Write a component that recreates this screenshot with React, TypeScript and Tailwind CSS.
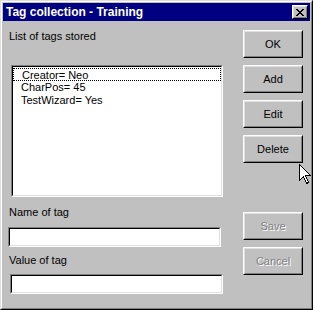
import React from "react";

const font = "font-['Liberation_Sans',Arial,sans-serif] text-[11px] leading-[13px] text-black";

const raised =
  "border border-t-white border-l-white border-b-black border-r-black";
const raisedInner =
  "border border-t-[#dfdfdf] border-l-[#dfdfdf] border-b-[#808080] border-r-[#808080]";
const sunken =
  "border border-t-[#808080] border-l-[#808080] border-b-white border-r-white";
const sunkenInner =
  "border border-t-black border-l-black border-b-[#dfdfdf] border-r-[#dfdfdf]";

function Btn({ label, disabled }: { label: string; disabled?: boolean }) {
  return (
    <div className={`w-[60px] h-[28px] ${raised}`}>
      <div className={`w-full h-full ${raisedInner} flex items-center justify-center`}>
        <span
          className={
            disabled
              ? "text-[#808080] [text-shadow:1px_1px_0_#fff]"
              : "text-black"
          }
        >
          {label}
        </span>
      </div>
    </div>
  );
}

function Field({ className }: { className: string }) {
  return (
    <div className={`h-[20px] ${sunken} ${className}`}>
      <div className={`w-full h-full bg-white ${sunkenInner}`}></div>
    </div>
  );
}

export default function App() {
  const tags = ["Creator= Neo", "CharPos= 45", "TestWizard= Yes"];

  return (
    <div className={`relative w-[313px] h-[310px] ${font}`}>
      <div className="w-full h-full border border-t-[#dfdfdf] border-l-[#dfdfdf] border-b-black border-r-black">
        <div className="w-full h-full border border-t-white border-l-white border-b-[#808080] border-r-[#808080] bg-[#c0c0c0] p-px flex flex-col">
          {/* title bar */}
          <div className="h-[18px] bg-[#000080] flex items-center justify-between pl-[3px] pr-[2px]">
            <span className="text-white font-bold text-[12px]">Tag collection - Training</span>
            <div className={`w-[16px] h-[14px] bg-[#c0c0c0] ${raised}`}>
              <div className={`w-full h-full ${raisedInner} flex items-center justify-center`}>
                <svg width="8" height="7" viewBox="0 0 8 7" shapeRendering="crispEdges">
                  <path
                    d="M0 0h2v1H0zM6 0h2v1H6zM1 1h2v1H1zM5 1h2v1H5zM2 2h4v1H2zM3 3h2v1H3zM2 4h4v1H2zM1 5h2v1H1zM5 5h2v1H5zM0 6h2v1H0zM6 6h2v1H6z"
                    fill="#000"
                  />
                </svg>
              </div>
            </div>
          </div>

          {/* body */}
          <div className="flex flex-1">
            <div className="w-[221px] flex flex-col">
              <div className="mt-[9px] ml-[6px] h-[13px]">List of tags stored</div>
              <div className={`mt-[22px] ml-[8px] w-[212px] h-[132px] ${sunken}`}>
                <div className={`w-full h-full bg-white ${sunkenInner} pt-px`}>
                  {tags.map((t, i) => (
                    <div
                      key={t}
                      className={`h-[13px] pl-[8px] leading-[12px] ${
                        i === 0 ? "border border-dotted border-black pl-[7px]" : ""
                      }`}
                    >
                      {t}
                    </div>
                  ))}
                </div>
              </div>
              <div className="mt-[9px] ml-[6px] h-[13px]">Name of tag</div>
              <Field className="mt-[8px] ml-[5px] w-[213px]" />
              <div className="mt-[7px] ml-[6px] h-[13px]">Value of tag</div>
              <Field className="mt-[7px] ml-[7px] w-[213px]" />
            </div>

            <div className="ml-[19px] flex flex-col">
              <div className="mt-[9px] flex flex-col gap-[7px]">
                <Btn label="OK" />
                <Btn label="Add" />
                <Btn label="Edit" />
                <Btn label="Delete" />
              </div>
              <div className="mt-[49px] flex flex-col gap-[7px]">
                <Btn label="Save" disabled />
                <Btn label="Cancel" disabled />
              </div>
            </div>
          </div>
        </div>
      </div>

      {/* mouse cursor */}
      <svg
        className="absolute left-[299px] top-[164px]"
        width="13"
        height="21"
        viewBox="0 0 13 21"
        shapeRendering="crispEdges"
      >
        <path
          d="M0.5 0.5 L0.5 16.5 L4.5 12.5 L7.5 19.5 L9.5 18.5 L6.5 11.5 L11.5 11.5 Z"
          fill="#fff"
          stroke="#000"
          strokeWidth="1"
        />
      </svg>
    </div>
  );
}
